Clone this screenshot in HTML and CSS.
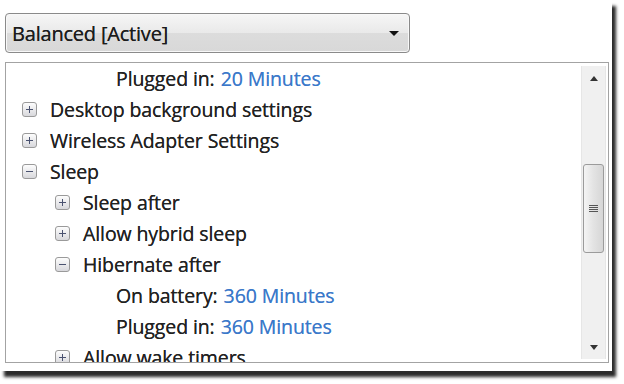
FILE: index.html
```html
<!DOCTYPE html>
<html lang="en">
<head>
  <meta charset="UTF-8">
  <title>Power Options - Advanced settings</title>
  <link rel="stylesheet" href="styles.css">
</head>
<body>

  <div class="frame">

    <!-- Plan selector -->
    <div class="plan-select">
      <span class="plan-name">Balanced [Active]</span>
      <span class="drop-arrow"></span>
    </div>

    <!-- Settings tree -->
    <div class="tree-box">
      <ul class="tree">
        <li class="row level-2"><span class="label">Plugged in:</span> <span class="value">20 Minutes</span></li>
        <li class="row level-0"><span class="toggle plus"></span><span class="label">Desktop background settings</span></li>
        <li class="row level-0"><span class="toggle plus"></span><span class="label">Wireless Adapter Settings</span></li>
        <li class="row level-0"><span class="toggle minus"></span><span class="label">Sleep</span></li>
        <li class="row level-1"><span class="toggle plus"></span><span class="label">Sleep after</span></li>
        <li class="row level-1"><span class="toggle plus"></span><span class="label">Allow hybrid sleep</span></li>
        <li class="row level-1"><span class="toggle minus"></span><span class="label">Hibernate after</span></li>
        <li class="row level-2"><span class="label">On battery:</span> <span class="value">360 Minutes</span></li>
        <li class="row level-2"><span class="label">Plugged in:</span> <span class="value">360 Minutes</span></li>
        <li class="row level-1"><span class="toggle plus"></span><span class="label">Allow wake timers</span></li>
      </ul>

      <div class="scrollbar">
        <div class="scroll-btn"><span class="arrow up"></span></div>
        <div class="track">
          <div class="thumb"><span class="grip"></span></div>
        </div>
        <div class="scroll-btn"><span class="arrow down"></span></div>
      </div>
    </div>

  </div>

</body>
</html>
```

FILE: styles.css
```css
html, body {
  height: 384px;
}
body {
  margin: 0;
  background-color: #fff;
  font-family: "Open Sans", "Noto Sans", Arial, sans-serif;
  color: #222;
  overflow: hidden;
}
.frame {
  width: 612px;
  height: 371px;
  box-sizing: border-box;
  padding: 13px 0 0 5px;
  background-color: #fff;
  box-shadow: 4px 6px 3px rgba(20, 20, 20, 0.9);
  overflow: hidden;
}

/* Plan dropdown */
.plan-select {
  width: 405px;
  height: 40px;
  box-sizing: border-box;
  display: flex;
  align-items: center;
  justify-content: space-between;
  padding: 0 10px 0 6px;
  border: 1px solid #8a8a8a;
  border-radius: 4px;
  background: linear-gradient(#f6f6f6, #e9e9e9 50%, #dcdcdc 51%, #d8d8d8);
  box-shadow: inset 0 0 0 1px #f8f8f8;
}
.plan-name {
  font-size: 20px;
  color: #1c1c1c;
  letter-spacing: -0.2px;
  text-shadow: 0 0 0.6px #333;
}
.drop-arrow {
  width: 0;
  height: 0;
  border-left: 5px solid transparent;
  border-right: 5px solid transparent;
  border-top: 5px solid #111;
}

/* Tree box */
.tree-box {
  width: 604px;
  height: 301px;
  margin-top: 9px;
  box-sizing: border-box;
  display: flex;
  border: 1px solid #a3a3a3;
  background-color: #fff;
}
.tree {
  flex: 1;
  list-style: none;
  margin: 0;
  padding: 0;
  overflow: hidden;
}
.row {
  height: 31px;
  display: flex;
  align-items: center;
  font-size: 19.5px;
  letter-spacing: -0.1px;
  white-space: nowrap;
  text-shadow: 0 0 0.6px #333;
}
.row.level-0 {
  padding-left: 16px;
}
.row.level-1 {
  padding-left: 49px;
}
.row.level-2 {
  padding-left: 110px;
}
.value {
  color: #3b78c9;
  margin-left: 6px;
  text-shadow: 0 0 0.6px #6a9ad8;
}
.toggle {
  position: relative;
  width: 13px;
  height: 13px;
  margin-right: 13px;
  flex-shrink: 0;
  border: 1px solid #9a9a9a;
  border-radius: 3px;
  background: linear-gradient(#fdfdfd, #d8d8dc);
}
.toggle::before,
.toggle.plus::after {
  content: "";
  position: absolute;
  background-color: #4a5270;
}
.toggle::before {
  left: 3px;
  top: 6px;
  width: 7px;
  height: 1px;
}
.toggle.plus::after {
  left: 6px;
  top: 3px;
  width: 1px;
  height: 7px;
}

/* Scrollbar */
.scrollbar {
  width: 23px;
  margin: 3px 2px 3px 0;
  display: flex;
  flex-direction: column;
  background-color: #f0f0f0;
  border-left: 1px solid #e6e6e6;
  border-right: 1px solid #e6e6e6;
}
.scroll-btn {
  height: 24px;
  display: flex;
  align-items: center;
  justify-content: center;
}
.arrow {
  width: 0;
  height: 0;
  border-left: 4px solid transparent;
  border-right: 4px solid transparent;
}
.arrow.up {
  border-bottom: 5px solid #333;
}
.arrow.down {
  border-top: 5px solid #333;
}
.track {
  flex: 1;
  padding-top: 74px;
}
.thumb {
  height: 89px;
  margin: 0 1px;
  box-sizing: border-box;
  display: flex;
  align-items: center;
  justify-content: center;
  border: 1px solid #9b9b9b;
  border-radius: 3px;
  background: linear-gradient(90deg, #f4f4f4, #e3e3e3 50%, #d6d6d6);
}
.grip {
  width: 9px;
  height: 7px;
  background: repeating-linear-gradient(#555 0 1px, transparent 1px 2px);
}
```
